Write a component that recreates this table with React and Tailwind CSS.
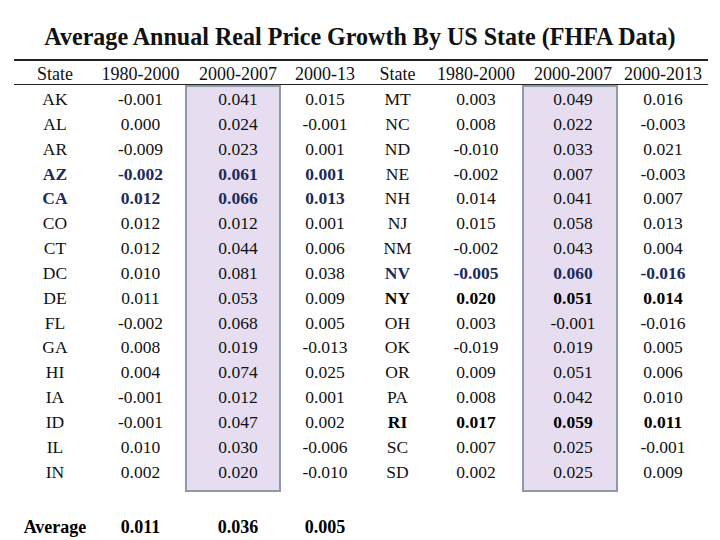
import React from 'react';

const leftRows = [
  { s: 'AK', a: '-0.001', b: '0.041', c: '0.015' },
  { s: 'AL', a: '0.000', b: '0.024', c: '-0.001' },
  { s: 'AR', a: '-0.009', b: '0.023', c: '0.001' },
  { s: 'AZ', a: '-0.002', b: '0.061', c: '0.001', tone: 'navy' },
  { s: 'CA', a: '0.012', b: '0.066', c: '0.013', tone: 'navy' },
  { s: 'CO', a: '0.012', b: '0.012', c: '0.001' },
  { s: 'CT', a: '0.012', b: '0.044', c: '0.006' },
  { s: 'DC', a: '0.010', b: '0.081', c: '0.038' },
  { s: 'DE', a: '0.011', b: '0.053', c: '0.009' },
  { s: 'FL', a: '-0.002', b: '0.068', c: '0.005' },
  { s: 'GA', a: '0.008', b: '0.019', c: '-0.013' },
  { s: 'HI', a: '0.004', b: '0.074', c: '0.025' },
  { s: 'IA', a: '-0.001', b: '0.012', c: '0.001' },
  { s: 'ID', a: '-0.001', b: '0.047', c: '0.002' },
  { s: 'IL', a: '0.010', b: '0.030', c: '-0.006' },
  { s: 'IN', a: '0.002', b: '0.020', c: '-0.010' },
];

const rightRows = [
  { s: 'MT', a: '0.003', b: '0.049', c: '0.016' },
  { s: 'NC', a: '0.008', b: '0.022', c: '-0.003' },
  { s: 'ND', a: '-0.010', b: '0.033', c: '0.021' },
  { s: 'NE', a: '-0.002', b: '0.007', c: '-0.003' },
  { s: 'NH', a: '0.014', b: '0.041', c: '0.007' },
  { s: 'NJ', a: '0.015', b: '0.058', c: '0.013' },
  { s: 'NM', a: '-0.002', b: '0.043', c: '0.004' },
  { s: 'NV', a: '-0.005', b: '0.060', c: '-0.016', tone: 'navy' },
  { s: 'NY', a: '0.020', b: '0.051', c: '0.014', tone: 'bold' },
  { s: 'OH', a: '0.003', b: '-0.001', c: '-0.016' },
  { s: 'OK', a: '-0.019', b: '0.019', c: '0.005' },
  { s: 'OR', a: '0.009', b: '0.051', c: '0.006' },
  { s: 'PA', a: '0.008', b: '0.042', c: '0.010' },
  { s: 'RI', a: '0.017', b: '0.059', c: '0.011', tone: 'bold' },
  { s: 'SC', a: '0.007', b: '0.025', c: '-0.001' },
  { s: 'SD', a: '0.002', b: '0.025', c: '0.009' },
];

// column widths add up to the 694px rule width
const columns = [
  { rows: leftRows, field: 's', head: 'State', w: 'w-[82px]' },
  { rows: leftRows, field: 'a', head: '1980-2000', w: 'w-[89px]' },
  { rows: leftRows, field: 'b', head: '2000-2007', w: 'w-[96px]', box: true, pad: 'pl-[10px]' },
  { rows: leftRows, field: 'c', head: '2000-13', w: 'w-[88px]' },
  { rows: rightRows, field: 's', head: 'State', w: 'w-[57px]' },
  { rows: rightRows, field: 'a', head: '1980-2000', w: 'w-[96px]', pad: 'pl-[4px]' },
  { rows: rightRows, field: 'b', head: '2000-2007', w: 'w-[96px]', box: true, pad: 'pl-[6px]' },
  { rows: rightRows, field: 'c', head: '2000-2013', w: 'w-[90px]' },
];

const toneClass = (tone) => {
  if (tone === 'navy') return 'font-bold text-[#1c2a5c]';
  if (tone === 'bold') return 'font-bold text-black';
  return 'text-[#111]';
};

function Column({ col }) {
  const frame = col.box
    ? 'bg-[#e6def0] border-2 border-[#8e9aa7] pb-[5px]'
    : 'border-y-2 border-transparent';
  return (
    <div className={`flex flex-col shrink-0 ${col.w} ${col.pad || ''} ${frame}`}>
      {col.rows.map(r => (
        <div key={r.s} className={`h-[24.85px] leading-[24.85px] text-center text-[17.5px] ${toneClass(r.tone)}`}>
          {r[col.field]}
        </div>
      ))}
    </div>
  );
}

export default function App() {
  return (
    <div className="w-[720px] h-[540px] bg-white overflow-hidden text-[#111]" style={{ fontFamily: '"Liberation Serif", "Times New Roman", serif' }}>
      {/* Title */}
      <div className="pt-[22px]">
        <div className="h-[30px] leading-[30px] text-center text-[26px] font-bold whitespace-nowrap scale-x-[0.925]">
          Average Annual Real Price Growth By US State (FHFA Data)
        </div>
      </div>

      {/* Table */}
      <div className="ml-[14px] w-[694px] mt-[7px] border-t-2 border-[#222]">
        <div className="flex h-[24px] border-b border-[#222] pt-[4px] leading-[19px] text-[18px]">
          {columns.map((col, i) => (
            <div key={i} className={`shrink-0 text-center ${col.w} ${col.pad || ''} ${col.box ? 'border-x-2 border-transparent' : ''}`}>
              {col.head}
            </div>
          ))}
        </div>
        <div className="flex items-start">
          {columns.map((col, i) => <Column key={i} col={col} />)}
        </div>

        {/* Average row */}
        <div className="flex mt-[23px] text-[18px] font-bold leading-[24px] text-black">
          <div className="w-[82px] text-center">Average</div>
          <div className="w-[89px] text-center">0.011</div>
          <div className="w-[96px] text-center pl-[10px] border-x-2 border-transparent">0.036</div>
          <div className="w-[88px] text-center">0.005</div>
        </div>
      </div>
    </div>
  );
}
